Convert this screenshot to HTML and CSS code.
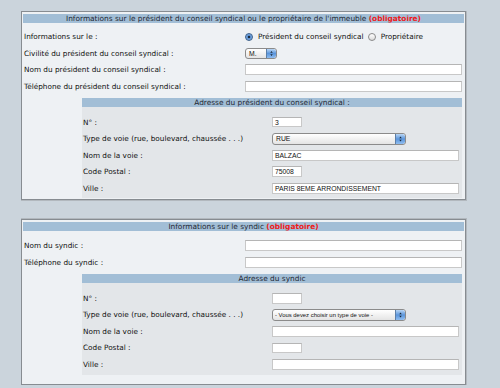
FILE: index.html
```html
<!DOCTYPE html>
<html lang="fr">
<head>
<meta charset="utf-8">
<title>Formulaire</title>
<link rel="stylesheet" href="styles.css">
</head>
<body>
<div class="panel">
  <div class="bar">Informations sur le président du conseil syndical ou le propriétaire de l'immeuble <b class="req">(obligatoire)</b></div>
  <div class="rows">
    <div class="lbl">Informations sur le :</div>
    <div class="val radios"><span class="radio on"></span><span class="rtxt">Président du conseil syndical</span><span class="radio"></span><span class="rtxt">Propriétaire</span></div>
    <div class="lbl">Civilité du président du conseil syndical :</div>
    <div class="val"><span class="select sel-m"><span class="stxt">M.</span><span class="stepper"><svg viewBox="0 0 9 11" width="9" height="11"><path d="M3 4.5 L4.5 2.5 L6 4.5Z M3 6.5 L4.5 8.5 L6 6.5Z" fill="#1b2a3a"/></svg></span></span></div>
    <div class="lbl">Nom du président du conseil syndical :</div>
    <div class="val"><span class="txt"></span></div>
    <div class="lbl">Téléphone du président du conseil syndical :</div>
    <div class="val"><span class="txt"></span></div>
  </div>
  <div class="sub">
    <div class="bar">Adresse du président du conseil syndical :</div>
    <div class="rows subrows">
      <div class="lbl">N° :</div>
      <div class="val"><span class="txt small">3</span></div>
      <div class="lbl">Type de voie (rue, boulevard, chaussée . . .)</div>
      <div class="val"><span class="select sel-type"><span class="stxt">RUE</span><span class="stepper"><svg viewBox="0 0 9 12" width="9" height="12"><path d="M3 5 L4.5 3 L6 5Z M3 7 L4.5 9 L6 7Z" fill="#1b2a3a"/></svg></span></span></div>
      <div class="lbl">Nom de la voie :</div>
      <div class="val"><span class="txt wide">BALZAC</span></div>
      <div class="lbl">Code Postal :</div>
      <div class="val"><span class="txt small">75008</span></div>
      <div class="lbl">Ville :</div>
      <div class="val"><span class="txt wide">PARIS 8EME ARRONDISSEMENT</span></div>
    </div>
  </div>
</div>

<div class="panel panel2">
  <div class="bar">Informations sur le syndic <b class="req">(obligatoire)</b></div>
  <div class="rows rows2">
    <div class="lbl">Nom du syndic :</div>
    <div class="val"><span class="txt"></span></div>
    <div class="lbl">Téléphone du syndic :</div>
    <div class="val"><span class="txt"></span></div>
  </div>
  <div class="sub">
    <div class="bar">Adresse du syndic</div>
    <div class="rows subrows">
      <div class="lbl">N° :</div>
      <div class="val"><span class="txt small"></span></div>
      <div class="lbl">Type de voie (rue, boulevard, chaussée . . .)</div>
      <div class="val"><span class="select sel-type"><span class="stxt tiny">- Vous devez choisir un type de voie -</span><span class="stepper"><svg viewBox="0 0 9 12" width="9" height="12"><path d="M3 5 L4.5 3 L6 5Z M3 7 L4.5 9 L6 7Z" fill="#1b2a3a"/></svg></span></span></div>
      <div class="lbl">Nom de la voie :</div>
      <div class="val"><span class="txt wide"></span></div>
      <div class="lbl">Code Postal :</div>
      <div class="val"><span class="txt small"></span></div>
      <div class="lbl">Ville :</div>
      <div class="val"><span class="txt wide"></span></div>
    </div>
  </div>
</div>
</body>
</html>
```

FILE: styles.css
```css
html, body {
  background: #cbd4dc;
}
body {
  margin: 11px 0 0 21px;
  font-family: "DejaVu Sans", Verdana, sans-serif;
  font-size: 7.3px;
  color: #111;
}
.panel {
  width: 441px;
  border: 1px solid #878c91;
  box-shadow: 0 0 0 1px #b2b8be;
  background: #eef1f4;
  padding: 2px 1px 1px;
}
.panel2 {
  margin-top: 19px;
  padding-bottom: 9px;
}
.bar {
  height: 9px;
  line-height: 9px;
  background: #a2bed6;
  text-align: center;
  color: #1f2833;
  white-space: nowrap;
  font-size: 7.4px;
}
.req {
  color: #f01818;
  font-weight: bold;
}
.rows {
  display: grid;
  grid-template-columns: 222px 1fr;
  grid-auto-rows: 16.5px;
  align-items: center;
  margin-top: 5.5px;
}
.rows2 {
  grid-auto-rows: 17px;
  margin-top: 5.5px;
}
.lbl {
  padding-left: 1px;
  white-space: nowrap;
}
.val {
  display: flex;
  align-items: center;
}
.radio {
  box-sizing: border-box;
  width: 8px;
  height: 8px;
  border-radius: 50%;
  border: 1px solid #8a8a8a;
  background: linear-gradient(#ffffff, #dcdcdc);
  margin-right: 4px;
  flex: none;
}
.radio.on {
  border-color: #3a5f8a;
  background: radial-gradient(circle, #1c2b3c 0 1.3px, #5d93d4 1.6px, #9cc2ee 100%);
}
.rtxt {
  margin-right: 4px;
  margin-left: 1px;
  white-space: nowrap;
}
.txt {
  display: block;
  box-sizing: border-box;
  width: 217px;
  height: 11px;
  border: 1px solid #c8c8c8;
  border-top-color: #b5b5b5;
  background: #fff;
  font-family: "Liberation Sans", Arial, sans-serif;
  font-size: 6.8px;
  line-height: 9px;
  padding-left: 2px;
  color: #111;
}
.txt.small {
  width: 30px;
  height: 10.5px;
}
.txt.wide {
  width: 187px;
}
.select {
  display: flex;
  align-items: center;
  box-sizing: border-box;
  height: 11px;
  border: 1px solid #8b8b8b;
  border-radius: 3px;
  background: linear-gradient(#ffffff, #e4e4e4);
  font-family: "Liberation Sans", Arial, sans-serif;
  font-size: 6.8px;
  color: #111;
  overflow: hidden;
}
.sel-m {
  width: 32px;
}
.sel-type {
  width: 134px;
  height: 12px;
}
.stxt {
  padding-left: 3px;
  white-space: nowrap;
  flex: 1;
  overflow: hidden;
}
.stxt.tiny {
  font-size: 5.9px;
  padding-left: 2px;
}
.stepper {
  display: flex;
  flex: none;
  width: 9px;
  height: 100%;
  background: linear-gradient(#b9d6f5, #5b95db 50%, #8fbdf0);
  border-left: 1px solid #5c7fa8;
  border-radius: 0 2px 2px 0;
}
.stepper svg {
  display: block;
  width: 9px;
  height: 100%;
}
.sub {
  margin: 3.5px 2px 0 59px;
  background: #e3e6e9;
  padding-bottom: 2px;
}
.subrows {
  grid-template-columns: 190px 1fr;
  margin-top: 6.75px;
}
```
